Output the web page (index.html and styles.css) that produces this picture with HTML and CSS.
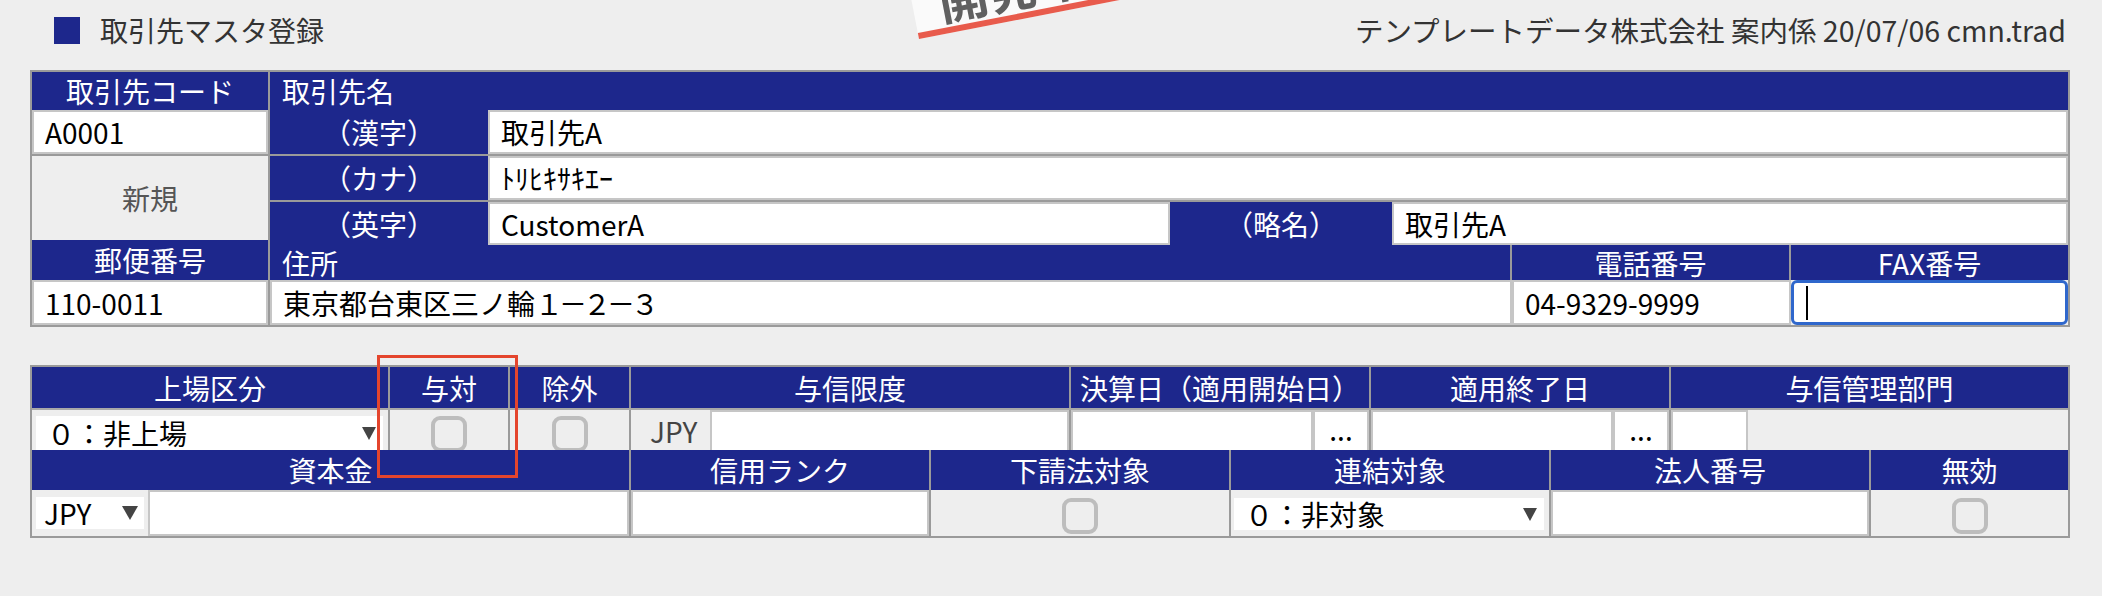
FILE: index.html
```html
<!DOCTYPE html>
<html lang="ja">
<head>
<meta charset="utf-8">
<title>取引先マスタ登録</title>
<link rel="stylesheet" href="styles.css">
</head>
<body>
<div class="page">
  <header class="topbar">
    <div class="title"><span class="mark"></span>取引先マスタ登録</div>
    <div class="info">テンプレートデータ株式会社 案内係 20/07/06 cmn.trad</div>
  </header>

  <div class="stamp">開発中</div>

  <section class="t1">
    <div class="t1-left">
      <div class="hd h38">取引先コード</div>
      <div class="field h44">A0001</div>
      <div class="status">新規</div>
      <div class="hd h40">郵便番号</div>
      <div class="field h45">110-0011</div>
    </div>
    <div class="t1-right">
      <div class="hd h38 left">取引先名</div>
      <div class="row h44">
        <div class="hd lbl">（漢字）</div>
        <div class="field grow">取引先A</div>
      </div>
      <div class="row sep h46">
        <div class="hd lbl">（カナ）</div>
        <div class="field grow">ﾄﾘﾋｷｻｷｴｰ</div>
      </div>
      <div class="row sep h45">
        <div class="hd lbl">（英字）</div>
        <div class="field w-eiji">CustomerA</div>
        <div class="hd lbl2">（略名）</div>
        <div class="field grow">取引先A</div>
      </div>
      <div class="row h35">
        <div class="hd left w-addr div">住所</div>
        <div class="hd w-tel div">電話番号</div>
        <div class="hd grow">FAX番号</div>
      </div>
      <div class="row h45">
        <div class="field w-addr">東京都台東区三ノ輪<span class="tight">１－２－３</span></div>
        <div class="field w-tel">04-9329-9999</div>
        <div class="field grow focus"><span class="caret"></span></div>
      </div>
    </div>
  </section>

  <section class="t2">
    <div class="gA h41">
      <div class="hd div">上場区分</div>
      <div class="hd div">与対</div>
      <div class="hd div">除外</div>
      <div class="hd div">与信限度</div>
      <div class="hd div">決算日（適用開始日）</div>
      <div class="hd div">適用終了日</div>
      <div class="hd">与信管理部門</div>
    </div>
    <div class="gA vA">
      <div class="cell div pad-sel">
        <div class="select">０：非上場<span class="tri"></span></div>
      </div>
      <div class="cell div center low"><span class="chk"></span></div>
      <div class="cell div center low"><span class="chk"></span></div>
      <div class="cell div">
        <span class="cur">JPY</span>
        <div class="field grow"></div>
      </div>
      <div class="cell div">
        <div class="field grow"></div>
        <div class="btn">...</div>
      </div>
      <div class="cell div">
        <div class="field grow"></div>
        <div class="btn">...</div>
      </div>
      <div class="cell">
        <div class="field w-dept"></div>
      </div>
    </div>
    <div class="gB h40">
      <div class="hd div">資本金</div>
      <div class="hd div">信用ランク</div>
      <div class="hd div">下請法対象</div>
      <div class="hd div">連結対象</div>
      <div class="hd div">法人番号</div>
      <div class="hd">無効</div>
    </div>
    <div class="gB vB">
      <div class="cell div">
        <div class="select cursel">JPY<span class="tri big"></span></div>
        <div class="field grow"></div>
      </div>
      <div class="cell div"><div class="field grow"></div></div>
      <div class="cell div center low"><span class="chk"></span></div>
      <div class="cell div pad-sel2">
        <div class="select">０：非対象<span class="tri"></span></div>
      </div>
      <div class="cell div"><div class="field grow"></div></div>
      <div class="cell center low"><span class="chk"></span></div>
    </div>
  </section>

  <div class="mark-box"></div>
</div>
</body>
</html>
```

FILE: styles.css
```css
* { box-sizing: border-box; }

body {
  margin: 0;
  background: #eeeeee;
  font-family: "Noto Sans CJK JP", "Noto Sans", sans-serif;
  font-size: 28px;
  line-height: 1;
  color: #000;
}

.page {
  position: relative;
  padding: 0 32px 0 30px;
  height: 596px;
  overflow: hidden;
}

/* top bar */
.topbar {
  height: 60px;
  margin-bottom: 10px;
  display: flex;
  align-items: center;
  justify-content: space-between;
  padding: 0 4px 0 24px;
  color: #333;
}
.title { display: flex; align-items: center; }
.mark {
  width: 26px;
  height: 27px;
  background: #1d278c;
  margin-right: 20px;
}
.info { font-size: 28.5px; }

/* stamp */
.stamp {
  position: absolute;
  left: 919px;
  top: -51px;
  width: 300px;
  height: 90px;
  background: #fafafa;
  border-bottom: 6px solid #e85b4c;
  transform-origin: left bottom;
  transform: rotate(-11deg);
  color: #606060;
  font-size: 50px;
  font-weight: 700;
  display: flex;
  align-items: flex-end;
  padding: 0 0 4px 26px;
}

/* generic */
.hd {
  background: #1d278c;
  color: #fff;
  display: flex;
  align-items: center;
  justify-content: center;
  white-space: nowrap;
}
.hd.left { justify-content: flex-start; padding-left: 12px; }
.div { border-right: 2px solid #9a9a9a; }

.field {
  background: #fff;
  border: 2px solid #c6c6c6;
  display: flex;
  align-items: center;
  padding-left: 11px;
  white-space: nowrap;
}
.tight { letter-spacing: -4px; }
.grow { flex: 1; }
.row { display: flex; }
.row > .field, .row > .hd { height: 100%; }
.sep { border-top: 2px solid #9a9a9a; }

.h35 { height: 35px; }
.h38 { height: 38px; }
.h40 { height: 40px; }
.h41 { height: 41px; }
.h44 { height: 44px; }
.h45 { height: 45px; }
.h46 { height: 46px; }

/* table 1 */
.t1 {
  display: flex;
  border: 2px solid #9a9a9a;
  height: 257px;
}
.t1-left {
  width: 238px;
  border-right: 2px solid #9a9a9a;
  display: flex;
  flex-direction: column;
}
.t1-right {
  flex: 1;
  display: flex;
  flex-direction: column;
}
.status {
  height: 86px;
  border-top: 2px solid #9a9a9a;
  background: #eeeeee;
  color: #555;
  display: flex;
  align-items: center;
  justify-content: center;
}
.lbl { width: 218px; }
.lbl2 { width: 222px; }
.w-eiji { width: 682px; }
.w-addr { width: 1242px; }
.w-tel { width: 279px; }
.focus {
  border: 3px solid #2f67cc;
  border-radius: 6px;
  padding-left: 12px;
}
.caret {
  width: 2px;
  height: 34px;
  background: #000;
}

/* table 2 */
.t2 {
  margin-top: 38px;
  border: 2px solid #9a9a9a;
}
.gA {
  display: grid;
  grid-template-columns: 358px 120px 121px 440px 300px 300px 1fr;
}
.gB {
  display: grid;
  grid-template-columns: 599px 300px 300px 320px 320px 1fr;
}
.vA {
  height: 42px;
  border-top: 2px solid #a8a8a8;
}
.vB { height: 46px; }

.cell {
  background: #eeeeee;
  display: flex;
  align-items: stretch;
  min-width: 0;
}
.cell.center { align-items: center; justify-content: center; }
.cell.low { padding-top: 6px; }
.pad-sel { padding: 6px 5px 2px 4px; }
.pad-sel2 { padding: 8px 5px 6px 3px; }

.select {
  flex: 1;
  background: #fff;
  display: flex;
  align-items: center;
  justify-content: space-between;
  padding: 0 7px 0 11px;
  white-space: nowrap;
}
.cursel {
  flex: 0 0 108px;
  height: 32px;
  align-self: center;
  margin: 0 4px 0 4px;
  padding: 0 6px 0 8px;
}
.tri {
  width: 0;
  height: 0;
  border-left: 7px solid transparent;
  border-right: 7px solid transparent;
  border-top: 13px solid #444;
}
.tri.big {
  border-left-width: 8px;
  border-right-width: 8px;
  border-top-width: 14px;
}

.chk {
  width: 36px;
  height: 36px;
  border: 4px solid #bdbdbd;
  border-radius: 9px;
}

.cur {
  width: 79px;
  padding-left: 19px;
  color: #444;
  display: flex;
  align-items: center;
}
.btn {
  width: 56px;
  background: #fff;
  border: 2px solid #c6c6c6;
  display: flex;
  align-items: center;
  justify-content: center;
  padding-bottom: 4px;
}
.w-dept { width: 77px; }

/* annotation */
.mark-box {
  position: absolute;
  left: 377px;
  top: 355px;
  width: 141px;
  height: 123px;
  border: 3px solid #e4452d;
}
```
